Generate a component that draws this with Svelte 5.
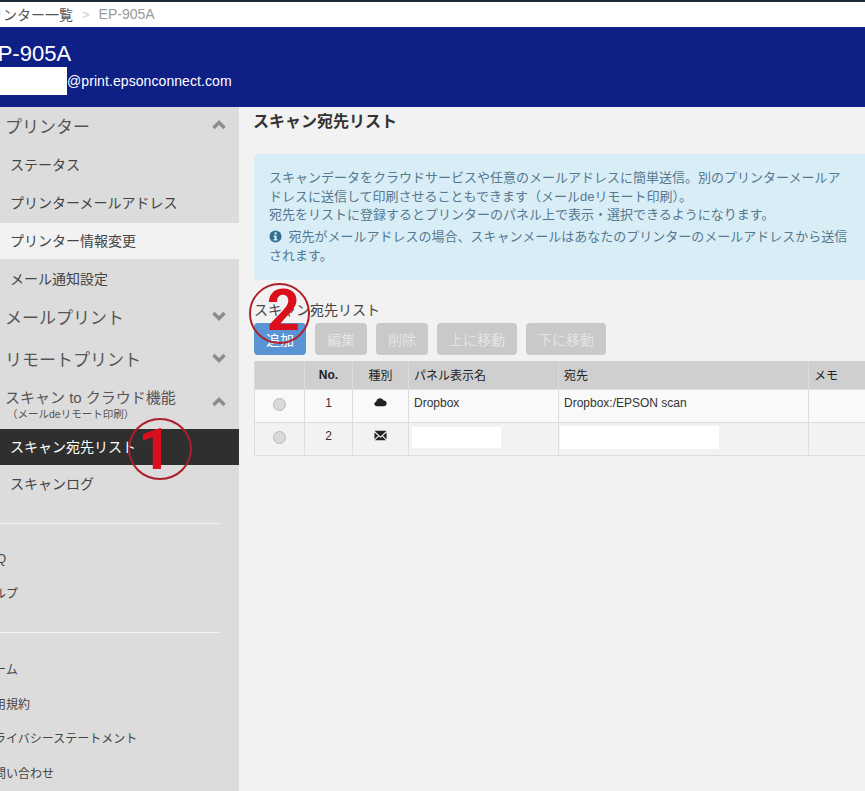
<script>
  const rows = [
    { no: 1, type: 'cloud', name: 'Dropbox', dest: 'Dropbox:/EPSON scan' },
    { no: 2, type: 'mail', name: '', dest: '' }
  ];
  const actions = ['編集', '削除', '上に移動', '下に移動'];
</script>

{#snippet chevron(up)}
  <svg class="chev" viewBox="0 0 14 10" width="14" height="10">
    <polyline points={up ? '1.5,8 7,2.5 12.5,8' : '1.5,2 7,7.5 12.5,2'} fill="none" stroke="#8c8c8c" stroke-width="3.4" />
  </svg>
{/snippet}

<div class="page">
  <div class="crumbs">
    <span class="crumb-link">プリンター一覧</span>
    <span class="sep">&gt;</span>
    <span>EP-905A</span>
  </div>

  <header class="head">
    <div class="model">EP-905A</div>
    <div class="address"><span class="masked"></span>@print.epsonconnect.com</div>
  </header>

  <div class="body">
    <nav class="side">
      <div class="group">プリンター {@render chevron(true)}</div>
      <a class="item first" href="#status">ステータス</a>
      <a class="item" href="#address">プリンターメールアドレス</a>
      <a class="item light" href="#info">プリンター情報変更</a>
      <a class="item" href="#notify">メール通知設定</a>
      <div class="group tall pull">メールプリント {@render chevron(false)}</div>
      <div class="group tall">リモートプリント {@render chevron(false)}</div>
      <div class="group double">
        <div>
          <div>スキャン to クラウド機能</div>
          <div class="sub">（メールdeリモート印刷）</div>
        </div>
        {@render chevron(true)}
      </div>
      <a class="item dark" href="#list">スキャン宛先リスト</a>
      <a class="item log" href="#log">スキャンログ</a>

      <hr />
      <a class="foot" href="#faq">FAQ</a>
      <a class="foot" href="#help">ヘルプ</a>
      <hr class="wide" />
      <a class="foot" href="#home">ホーム</a>
      <a class="foot" href="#terms">利用規約</a>
      <a class="foot" href="#privacy">プライバシーステートメント</a>
      <a class="foot" href="#contact">お問い合わせ</a>

      <div class="mark one"><span>1</span></div>
    </nav>

    <main class="main">
      <h1>スキャン宛先リスト</h1>

      <div class="info">
        <p>スキャンデータをクラウドサービスや任意のメールアドレスに簡単送信。別のプリンターメールアドレスに送信して印刷させることもできます（メールdeリモート印刷）。<br />宛先をリストに登録するとプリンターのパネル上で表示・選択できるようになります。</p>
        <p class="note">
          <svg class="i" viewBox="0 0 14 14" width="13" height="13">
            <circle cx="7" cy="7" r="6.5" fill="#31708f" />
            <rect x="5.9" y="2.6" width="2.4" height="2.2" fill="#d9edf7" />
            <path d="M4.9 6h3.3v4h1v1.4H4.9V10h1V7.4h-1z" fill="#d9edf7" />
          </svg>
          宛先がメールアドレスの場合、スキャンメールはあなたのプリンターのメールアドレスから送信されます。
        </p>
      </div>

      <div class="label">スキャン宛先リスト</div>
      <div class="buttons">
        <button class="add">追加</button>
        {#each actions as a}
          <button disabled>{a}</button>
        {/each}
      </div>

      <table>
        <colgroup>
          <col class="w-radio" /><col class="w-no" /><col class="w-kind" />
          <col class="w-name" /><col class="w-dest" /><col />
        </colgroup>
        <thead>
          <tr><th></th><th class="c bold">No.</th><th class="c">種別</th><th>パネル表示名</th><th>宛先</th><th>メモ</th></tr>
        </thead>
        <tbody>
          {#each rows as r}
            <tr>
              <td class="c"><span class="radio"></span></td>
              <td class="c">{r.no}</td>
              <td class="c">
                {#if r.type === 'cloud'}
                  <svg class="kind" viewBox="0 0 14 10" width="13" height="10">
                    <path d="M3.2 9.5C1.4 9.5.4 8.4.4 7c0-1.3.9-2.2 2-2.4C2.6 2.6 4.3 1 6.5 1c1.8 0 3.2 1 3.8 2.5 2-.1 3.3 1.3 3.3 3 0 1.7-1.3 3-3.1 3z" fill="#222" />
                  </svg>
                {:else}
                  <svg class="kind" viewBox="0 0 14 11" width="13" height="11">
                    <path d="M.5.5h13L7 6.5z" fill="#222" />
                    <path d="M.5 2.3v7.2L4.4 5.8zM13.5 2.3v7.2L9.6 5.8zM5.3 6.7 7 8.2l1.700-1.500 4.300 3.800H1z" fill="#222" />
                  </svg>
                {/if}
              </td>
              <td>{#if r.name}{r.name}{:else}<span class="blank name"></span>{/if}</td>
              <td>{#if r.dest}{r.dest}{:else}<span class="blank dest"></span>{/if}</td>
              <td></td>
            </tr>
          {/each}
        </tbody>
      </table>

      <div class="mark two"><span>2</span></div>
    </main>
  </div>
</div>

<style>
  :global(body) {
    margin: 0;
    overflow: hidden;
    background: #f2f2f2;
  }
  .page {
    width: 905px;
    height: 791px;
    margin-left: -25px;
    overflow: hidden;
    font-family: "Liberation Sans", "Noto Sans CJK JP", sans-serif;
    color: #333;
    font-size: 14px;
  }
  .crumbs {
    height: 24px;
    padding-bottom: 1px;
    border-top: 2px solid #1b2a33;
    background: #fff;
    display: flex;
    align-items: center;
    gap: 9px;
    color: #999;
  }
  .crumb-link {
    color: #555;
  }
  .sep {
    color: #ccc;
    font-size: 13px;
  }
  .head {
    height: 80px;
    box-sizing: border-box;
    background: #0e1f85;
    color: #fff;
    padding: 14px 0 0 8px;
  }
  .model {
    font-size: 22px;
    line-height: 26px;
  }
  .address {
    display: flex;
    align-items: center;
    height: 28px;
    margin-left: -8px;
    line-height: 27px;
    letter-spacing: 0.08px;
  }
  .masked {
    width: 92px;
    height: 28px;
    background: #fff;
  }
  .body {
    display: flex;
    height: 684px;
  }
  .side {
    position: relative;
    width: 264px;
    flex: none;
    background: #dcdcdc;
    color: #444;
  }
  .group {
    display: flex;
    align-items: center;
    justify-content: space-between;
    height: 36px;
    padding: 0 13px 0 30px;
    font-size: 17px;
    color: #555;
  }
  .group.tall {
    height: 42px;
  }
  .group.pull {
    margin-top: -2px;
  }
  .group.double {
    height: 50px;
    line-height: 20px;
    font-size: 15px;
  }
  .group.double .chev {
    margin-top: -4px;
  }
  .sub {
    font-size: 10.5px;
    line-height: 12px;
    margin-left: 2px;
    color: #555;
  }
  .chev {
    flex: none;
  }
  .item {
    display: block;
    height: 36px;
    line-height: 36px;
    padding-left: 35px;
    color: #444;
    text-decoration: none;
    margin-top: 2px;
  }
  .item.first {
    margin-top: 4px;
  }
  .item.light {
    background: #f2f2f2;
  }
  .item.dark {
    background: #2f2f2f;
    color: #fff;
    margin-top: 0;
  }
  .item.log {
    margin-top: 1px;
  }
  hr {
    border: 0;
    border-top: 1px solid #f4f4f4;
    margin: 21px 20px 18px 0;
  }
  hr.wide {
    margin-top: 21px;
    margin-bottom: 20px;
  }
  .foot {
    display: block;
    height: 34.5px;
    line-height: 34.5px;
    padding-left: 7px;
    font-size: 12px;
    color: #444;
    text-decoration: none;
  }
  .main {
    position: relative;
    flex: 1;
    min-width: 0;
    padding: 0 0 0 15px;
    background: #f2f2f2;
  }
  h1 {
    margin: 3px 0 0 -1px;
    font-size: 16px;
    line-height: 24px;
    font-weight: 700;
    color: #333;
  }
  .info {
    margin-top: 20px;
    width: 618px;
    box-sizing: border-box;
    padding: 15px 20px 15px 15px;
    background: #d9edf7;
    border-radius: 4px;
    color: #56788f;
    font-size: 13px;
    line-height: 18.57px;
  }
  .info p {
    margin: 0;
  }
  .info .note {
    margin-top: 3.5px;
  }
  .i {
    vertical-align: -2px;
    margin-right: 3px;
  }
  .label {
    margin-top: 20px;
    line-height: 20px;
    color: #444;
  }
  .buttons {
    display: flex;
    gap: 9px;
    margin-top: 3px;
  }
  button {
    height: 32px;
    padding: 0 12px;
    border: 0;
    border-radius: 4px;
    font: inherit;
    background: #c9c9c9;
    color: #e4e4e4;
  }
  .add {
    background: #5b94d4;
    color: #fff;
  }
  table {
    margin-top: 6px;
    width: 640px;
    table-layout: fixed;
    border-collapse: collapse;
    font-size: 12px;
    color: #333;
  }
  .w-radio { width: 50px; }
  .w-no { width: 48px; }
  .w-kind { width: 56px; }
  .w-name { width: 150px; }
  .w-dest { width: 250px; }
  th {
    height: 28px;
    box-sizing: border-box;
    padding: 0 5px 1px;
    background: #cfcfcf;
    border: 1px solid #dcdcdc;
    border-width: 0 1px;
    text-align: left;
    font-weight: 400;
    color: #222;
  }
  th.bold {
    font-weight: 700;
  }
  td {
    height: 33px;
    padding: 4px 5px 3px;
    vertical-align: top;
    box-sizing: border-box;
    border: 1px solid #ddd;
    line-height: 18px;
    background: #f2f2f2;
  }
  tbody tr:first-child td {
    background: #f9f9f9;
  }
  .c {
    text-align: center;
  }
  .radio {
    display: inline-block;
    width: 13px;
    height: 13px;
    margin-top: 4px;
    border-radius: 50%;
    border: 1.5px solid #b8b8b8;
    box-sizing: border-box;
    background: #d9d9d9;
  }
  .kind {
    display: block;
    margin: 3px auto 0;
  }
  .blank {
    display: block;
    background: #fff;
    height: 21px;
    margin: 0 0 0 -2px;
  }
  .blank.name {
    width: 89px;
  }
  .blank.dest {
    width: 159px;
    height: 23px;
    margin: -1px 0 0 -4px;
  }
  .mark {
    position: absolute;
    box-sizing: border-box;
    border: 2.5px solid #ad2029;
    border-radius: 50%;
    display: flex;
    align-items: center;
    justify-content: center;
    font-family: Roboto, "Liberation Sans", sans-serif;
    font-weight: 700;
    color: #db0f1c;
    pointer-events: none;
  }
  .mark.one {
    width: 64px;
    height: 62px;
    left: 153px;
    top: 311px;
    font-size: 58px;
    padding-right: 10px;
  }
  .mark.two {
    width: 61px;
    height: 61px;
    left: 10px;
    top: 176px;
    font-size: 58px;
    padding: 0 0 8px 8px;
  }
</style>
